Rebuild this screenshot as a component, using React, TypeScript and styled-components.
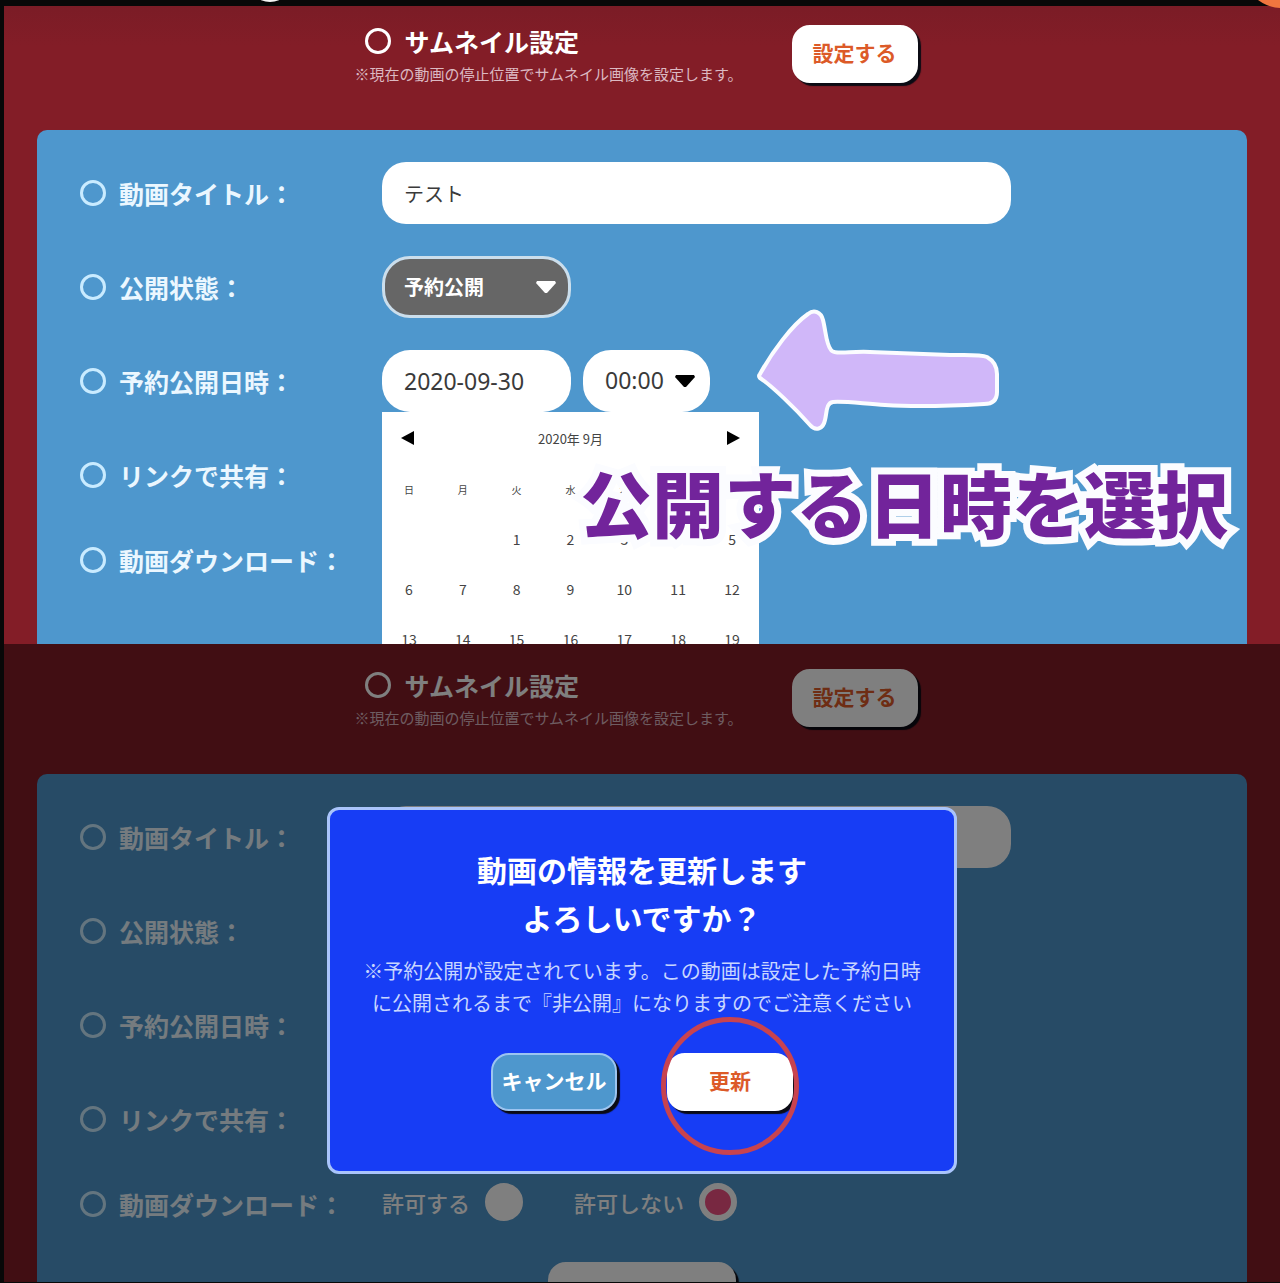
import React, { useId } from "react";
import styled, { createGlobalStyle, css } from "styled-components";

const GlobalStyle = createGlobalStyle`
  *, *::before, *::after { box-sizing: border-box; }
  body {
    margin: 0;
    background: #080808;
    font-family: "Noto Sans CJK JP", "Noto Sans", sans-serif;
  }
  button, input, select { font-family: inherit; margin: 0; }
`;

const Page = styled.main`
  position: relative;
  overflow: hidden;
  padding: 6px 0 1px 4px;
`;

const Bubble = styled.span<{ $size: number; $color: string }>`
  position: absolute;
  width: ${(p) => p.$size}px;
  height: ${(p) => p.$size}px;
  border-radius: 50%;
  background: ${(p) => p.$color};
  z-index: 5;
`;

const WhiteBubble = styled(Bubble)`
  top: -44px;
  left: 247px;
`;

const OrangeBubble = styled(Bubble)`
  top: -72px;
  right: -42px;
`;

const Frame = styled.section<{ $first?: boolean }>`
  position: relative;
  overflow: hidden;
  aspect-ratio: 2 / 1;
  padding: ${(p) => (p.$first ? 19 : 25)}px 33px 0;
  background: ${(p) =>
    p.$first ? "linear-gradient(#7b1c26, #831d27 40px)" : "#831d27"};
`;

const Header = styled.header`
  display: flex;
  justify-content: center;
  gap: 49px;
  height: 105px;
  padding-right: 12px;
`;

const HeaderText = styled.div`
  color: #fff;
`;

const Heading = styled.h2`
  display: flex;
  align-items: center;
  gap: 13px;
  margin: 0;
  padding-left: 11px;
  font-size: 25px;
  line-height: 32px;
  font-weight: 700;
`;

const Hint = styled.p`
  margin: 5px 0 0;
  color: #dcb9c2;
  font-size: 15px;
  line-height: 24px;
`;

const Ring = styled.span`
  flex: none;
  width: 26px;
  height: 26px;
  border: 3px solid currentColor;
  border-radius: 50%;
`;

const Button = styled.button<{ $tone?: "plain" | "blue" }>`
  flex: none;
  width: 126px;
  height: 58px;
  padding: 0 0 4px;
  border: 2px solid #fff;
  border-radius: 18px;
  background: #fff;
  box-shadow: 3px 3px 1px #0b0b14;
  color: #dc5a28;
  font-size: 21px;
  line-height: 30px;
  font-weight: 700;
  ${(p) =>
    p.$tone === "blue" &&
    css`
      border-color: #9cc4f0;
      background: #4e97cd;
      color: #fff;
    `}
`;

const Panel = styled.form`
  display: flex;
  flex-direction: column;
  gap: 32px;
  padding: 32px 43px 60px;
  border-radius: 10px;
  background: #4e97cd;
`;

const Row = styled.div<{ $short?: boolean }>`
  display: grid;
  grid-template-columns: 302px minmax(0, 1fr);
  align-items: center;
  height: ${(p) => (p.$short ? 44 : 62)}px;
`;

const labelLook = css`
  display: flex;
  align-items: center;
  gap: 13px;
  color: #ebf7ff;
  font-size: 25px;
  line-height: 34px;
  font-weight: 700;
  white-space: nowrap;

  ${Ring} {
    color: #c9ebff;
  }
`;

const Label = styled.label`
  ${labelLook}
`;

const Caption = styled.div`
  ${labelLook}
`;

const Controls = styled.div`
  position: relative;
  display: flex;
  align-items: center;
  gap: 12px;
`;

const TextBox = styled.input<{ $date?: boolean }>`
  width: ${(p) => (p.$date ? "189px" : "100%")};
  max-width: 629px;
  height: 62px;
  padding: 0 22px;
  border: 0;
  border-radius: ${(p) => (p.$date ? 28 : 24)}px;
  background: #fff;
  color: #3a3a3a;
  font-size: 20px;
  ${(p) =>
    p.$date &&
    css`
      font-family: "Noto Sans", sans-serif;
      font-size: 23px;
    `}
`;

const SelectWrap = styled.div<{ $wide?: boolean }>`
  display: grid;
  align-items: center;
  width: ${(p) => (p.$wide ? 189 : 127)}px;
  color: ${(p) => (p.$wide ? "#fff" : "#000")};

  > * {
    grid-area: 1 / 1;
  }

  > svg {
    justify-self: end;
    margin-right: 15px;
    pointer-events: none;
  }
`;

const Select = styled.select<{ $dark?: boolean }>`
  appearance: none;
  width: 100%;
  height: 62px;
  padding: 0 19px 2px;
  border: 3px solid #fff;
  border-radius: 28px;
  background: #fff;
  color: #3a3a3a;
  font-family: "Noto Sans", sans-serif;
  font-size: 23px;
  ${(p) =>
    p.$dark &&
    css`
      border-color: #cbdeec;
      background: #666;
      color: #fff;
      font-family: "Noto Sans CJK JP", sans-serif;
      font-size: 20px;
      font-weight: 700;
    `}
`;

const Calendar = styled.div`
  position: absolute;
  top: 62px;
  left: 0;
  z-index: 1;
  width: 377px;
  background: #fff;
  color: #444;
`;

const MonthBar = styled.div`
  display: flex;
  align-items: center;
  justify-content: space-between;
  height: 52px;
  padding: 0 19px;
  font-size: 13px;
`;

const MonthButton = styled.button`
  display: flex;
  padding: 0;
  border: 0;
  background: none;
  color: #000;
`;

const Days = styled.table`
  width: 100%;
  table-layout: fixed;
  border-collapse: collapse;

  th,
  td {
    height: 50px;
    padding: 0;
    text-align: center;
    font-size: 14px;
    font-weight: 400;
  }

  th {
    font-size: 10px;
  }
`;

const Choice = styled.label`
  display: flex;
  align-items: center;
  gap: 15px;
  margin-right: 39px;
  padding-bottom: 4px;
  color: #fff;
  font-size: 22px;
  line-height: 32px;
  font-weight: 500;
`;

const Radio = styled.input`
  appearance: none;
  width: 38px;
  height: 38px;
  border: 6px solid #fff;
  border-radius: 50%;
  background: #fff;

  &:checked {
    background: #f05082;
  }
`;

const Submit = styled(Button)`
  align-self: center;
  width: 188px;
  height: 62px;
  margin-top: 4px;
`;

const Pointer = styled.svg`
  position: absolute;
  top: 300px;
  left: 752px;
  z-index: 2;
`;

const Callout = styled.p`
  position: absolute;
  top: 445px;
  left: 576px;
  z-index: 2;
  margin: 0;
  color: #72249b;
  font-size: 72px;
  line-height: 100px;
  font-weight: 900;
  white-space: nowrap;
  -webkit-text-stroke: 14px #fbfcff;
  paint-order: stroke fill;
  stroke-linejoin: round;
`;

const Overlay = styled.div`
  position: absolute;
  inset: 0;
  z-index: 3;
  display: flex;
  align-items: flex-start;
  justify-content: center;
  padding-top: 163px;
  background: rgba(0, 0, 0, 0.5);
`;

const Dialog = styled.div`
  width: 630px;
  padding: 35px 0 60px;
  border: 3px solid #a9c4fb;
  border-radius: 12px;
  background: #173df5;
  color: #fff;
  text-align: center;
`;

const DialogTitle = styled.h3`
  margin: 0;
  font-size: 30px;
  line-height: 48px;
  font-weight: 700;
`;

const DialogNote = styled.p`
  margin: 14px 0 34px;
  color: #c8d6ff;
  font-size: 20px;
  line-height: 32px;
`;

const Actions = styled.div`
  display: flex;
  justify-content: center;
  gap: 50px;
`;

const Marked = styled.div`
  position: relative;
  display: flex;
`;

const Marker = styled.span`
  position: absolute;
  inset: -36px -6px -44px;
  border: 5px solid #c8434f;
  border-radius: 50%;
  pointer-events: none;
`;

const Triangle = ({ d, w, h }: { d: string; w: number; h: number }) => (
  <svg width={w} height={h} viewBox={`0 0 ${w} ${h}`} aria-hidden="true">
    <path d={d} fill="currentColor" />
  </svg>
);

const DownArrow = () => <Triangle w={20} h={12} d="M1 0H19L20 2L11 12H9L0 2Z" />;

const WEEKDAYS = ["日", "月", "火", "水", "木", "金", "土"];
const WEEKS = [
  ["", "", 1, 2, 3, 4, 5],
  [6, 7, 8, 9, 10, 11, 12],
  [13, 14, 15, 16, 17, 18, 19],
];

function DatePicker() {
  return (
    <Calendar>
      <MonthBar>
        <MonthButton type="button" aria-label="前の月">
          <Triangle w={13} h={14} d="M13 0V14L0 7Z" />
        </MonthButton>
        <span>2020年 9月</span>
        <MonthButton type="button" aria-label="次の月">
          <Triangle w={13} h={14} d="M0 0V14L13 7Z" />
        </MonthButton>
      </MonthBar>
      <Days>
        <thead>
          <tr>
            {WEEKDAYS.map((d) => (
              <th key={d} scope="col">{d}</th>
            ))}
          </tr>
        </thead>
        <tbody>
          {WEEKS.map((week, i) => (
            <tr key={i}>
              {week.map((d, j) => (
                <td key={j}>{d}</td>
              ))}
            </tr>
          ))}
        </tbody>
      </Days>
    </Calendar>
  );
}

function VideoSettings({ picking }: { picking?: boolean }) {
  const id = useId();
  return (
    <>
      <Header>
        <HeaderText>
          <Heading><Ring />サムネイル設定</Heading>
          <Hint>※現在の動画の停止位置でサムネイル画像を設定します。</Hint>
        </HeaderText>
        <Button type="button">設定する</Button>
      </Header>
      <Panel>
        <Row>
          <Label htmlFor={`${id}-title`}><Ring />動画タイトル：</Label>
          <Controls>
            <TextBox id={`${id}-title`} type="text" defaultValue={picking ? "テスト" : ""} />
          </Controls>
        </Row>
        <Row>
          <Label htmlFor={`${id}-state`}><Ring />公開状態：</Label>
          <Controls>
            <SelectWrap $wide>
              <Select $dark id={`${id}-state`}>
                <option>予約公開</option>
              </Select>
              <DownArrow />
            </SelectWrap>
          </Controls>
        </Row>
        <Row>
          <Label htmlFor={`${id}-date`}><Ring />予約公開日時：</Label>
          <Controls>
            <TextBox $date id={`${id}-date`} type="text" defaultValue="2020-09-30" />
            <SelectWrap>
              <Select aria-label="時刻">
                <option>00:00</option>
              </Select>
              <DownArrow />
            </SelectWrap>
            {picking && <DatePicker />}
          </Controls>
        </Row>
        <Row>
          <Caption><Ring />リンクで共有：</Caption>
        </Row>
        <Row $short>
          <Caption><Ring />動画ダウンロード：</Caption>
          {!picking && (
            <Controls>
              <Choice>
                許可する
                <Radio type="radio" name={`${id}-dl`} />
              </Choice>
              <Choice>
                許可しない
                <Radio type="radio" name={`${id}-dl`} defaultChecked />
              </Choice>
            </Controls>
          )}
        </Row>
        <Submit type="button" aria-label="更新" />
      </Panel>
    </>
  );
}

export default function App() {
  return (
    <>
      <GlobalStyle />
      <Page>
        <WhiteBubble $size={46} $color="#f4f4f4" />
        <OrangeBubble $size={80} $color="#f0763f" />
        <Frame $first>
          <VideoSettings picking />
          <Pointer width="248" height="132" viewBox="756 306 248 132" aria-hidden="true">
            <path
              d="M760 374C772 352 792 325 808 314C814 309 821 312 823 320C826 332 826 344 831 350C834 355 850 351 870 352L950 355C965 355 980 354 987 357C994 361 997 366 997 374V392C997 401 992 404 984 404C950 406 915 407 885 405C865 404 845 401 833 402C826 403 827 412 825 420C823 430 815 431 810 425C795 408 772 386 760 378Q758 376 760 374Z"
              fill="#d0b7f9"
              stroke="#fbfcff"
              strokeWidth="4"
              strokeLinejoin="round"
            />
          </Pointer>
          <Callout>公開する日時を選択</Callout>
        </Frame>
        <Frame>
          <VideoSettings />
          <Overlay>
            <Dialog role="dialog" aria-label="更新の確認">
              <DialogTitle>
                動画の情報を更新します
                <br />
                よろしいですか？
              </DialogTitle>
              <DialogNote>
                ※予約公開が設定されています。この動画は設定した予約日時
                <br />
                に公開されるまで『非公開』になりますのでご注意ください
              </DialogNote>
              <Actions>
                <Button type="button" $tone="blue">キャンセル</Button>
                <Marked>
                  <Button type="button">更新</Button>
                  <Marker />
                </Marked>
              </Actions>
            </Dialog>
          </Overlay>
        </Frame>
      </Page>
    </>
  );
}
